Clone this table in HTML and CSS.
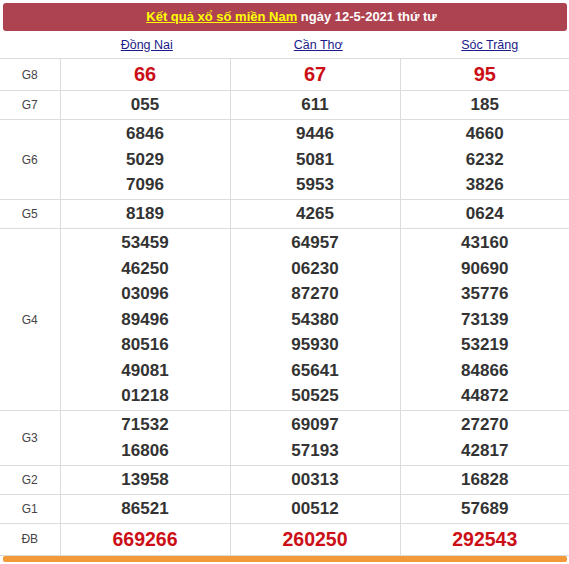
FILE: index.html
```html
<!DOCTYPE html>
<html lang="vi">
<head>
<meta charset="utf-8">
<title>Kết quả xổ số miền Nam</title>
<link rel="stylesheet" href="styles.css">
</head>
<body>
<div class="box">
  <div class="title-bar"><a href="#" class="title-link">Kết quả xổ số miền Nam</a> ngày 12-5-2021 thứ tư</div>
  <div class="provinces">
    <span class="prov-spacer"></span>
    <a href="#" class="prov">Đồng Nai</a>
    <a href="#" class="prov">Cần Thơ</a>
    <a href="#" class="prov">Sóc Trăng</a>
  </div>
  <table class="results">
    <colgroup><col class="c-label"><col class="c-prov"><col class="c-prov"><col class="c-prov-last"></colgroup>
    <tbody>
      <tr class="big"><td class="label">G8</td><td><div class="n red">66</div></td><td><div class="n red">67</div></td><td><div class="n red">95</div></td></tr>
      <tr><td class="label">G7</td><td><div class="n">055</div></td><td><div class="n">611</div></td><td><div class="n">185</div></td></tr>
      <tr><td class="label">G6</td>
        <td><div class="n">6846</div><div class="n">5029</div><div class="n">7096</div></td>
        <td><div class="n">9446</div><div class="n">5081</div><div class="n">5953</div></td>
        <td><div class="n">4660</div><div class="n">6232</div><div class="n">3826</div></td></tr>
      <tr><td class="label">G5</td><td><div class="n">8189</div></td><td><div class="n">4265</div></td><td><div class="n">0624</div></td></tr>
      <tr><td class="label">G4</td>
        <td><div class="n">53459</div><div class="n">46250</div><div class="n">03096</div><div class="n">89496</div><div class="n">80516</div><div class="n">49081</div><div class="n">01218</div></td>
        <td><div class="n">64957</div><div class="n">06230</div><div class="n">87270</div><div class="n">54380</div><div class="n">95930</div><div class="n">65641</div><div class="n">50525</div></td>
        <td><div class="n">43160</div><div class="n">90690</div><div class="n">35776</div><div class="n">73139</div><div class="n">53219</div><div class="n">84866</div><div class="n">44872</div></td></tr>
      <tr><td class="label">G3</td>
        <td><div class="n">71532</div><div class="n">16806</div></td>
        <td><div class="n">69097</div><div class="n">57193</div></td>
        <td><div class="n">27270</div><div class="n">42817</div></td></tr>
      <tr><td class="label">G2</td><td><div class="n">13958</div></td><td><div class="n">00313</div></td><td><div class="n">16828</div></td></tr>
      <tr><td class="label">G1</td><td><div class="n">86521</div></td><td><div class="n">00512</div></td><td><div class="n">57689</div></td></tr>
      <tr class="big"><td class="label">ĐB</td><td><div class="n red db">669266</div></td><td><div class="n red db">260250</div></td><td><div class="n red db">292543</div></td></tr>
    </tbody>
  </table>
  <div class="bottom-bar"></div>
</div>
</body>
</html>
```
FILE: styles.css
```css
html, body {
  margin: 0;
  padding: 0;
  background: #fff;
}
.box {
  width: 569px;
  font-family: "Liberation Sans", Arial, sans-serif;
  color: #333;
  padding-top: 3px;
  overflow: hidden;
}
.title-bar {
  margin: 0 2px 0 3px;
  padding-left: 13px;
  height: 28px;
  line-height: 28px;
  background: #ad4250;
  border-radius: 3px;
  color: #fff;
  font-weight: bold;
  font-size: 13px;
  text-align: center;
}
.title-link {
  color: #ffff00;
  text-decoration: underline;
}
.provinces {
  display: flex;
  height: 27px;
  align-items: center;
  white-space: nowrap;
}
.prov-spacer {
  flex: 0 0 61px;
}
.prov {
  flex: 0 0 171.5px;
  text-align: center;
  color: #1b1b8a;
  font-size: 12.5px;
  text-decoration: underline;
}
.results {
  width: 569px;
  border-collapse: collapse;
  table-layout: fixed;
  border-top: 1px solid #dcdcdc;
}
.c-label { width: 60px; }
.c-prov { width: 170px; }
.c-prov-last { width: 169px; }
.results td {
  border-bottom: 1px solid #dcdcdc;
  border-left: 1px solid #dcdcdc;
  padding: 1.25px 0;
  text-align: center;
  vertical-align: middle;
}
.results td.label {
  border-left: none;
  font-size: 12px;
  color: #444;
}
.n {
  font-size: 17px;
  font-weight: bold;
  line-height: 25.5px;
  color: #333;
}
.big .n {
  line-height: 28.5px;
}
.red {
  color: #cc0f17;
  font-size: 20px;
}
.red.db {
  font-size: 19.5px;
}
.bottom-bar {
  margin: 0 2px 0 3px;
  height: 6px;
  background: #f29a3a;
  border-radius: 2px;
}
```
